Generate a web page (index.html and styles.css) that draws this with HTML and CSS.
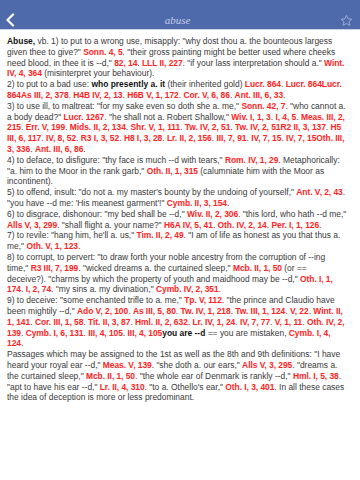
FILE: index.html
```html
<!DOCTYPE html>
<html>
<head>
<meta charset="utf-8">
<link rel="stylesheet" href="styles.css">
</head>
<body>
<header class="bar">
  <div class="nav">
    <svg class="back" width="10" height="14" viewBox="0 0 10 14"><path d="M8 1.5 L2.5 7 L8 12.5" fill="none" stroke="#ffffff" stroke-width="2.2" stroke-linecap="round" stroke-linejoin="round"/></svg>
    <span class="title">abuse</span>
    <svg class="star" width="13" height="13" viewBox="0 0 24 24"><path d="M12 2.5 L14.9 8.9 L21.8 9.6 L16.6 14.2 L18.1 21 L12 17.5 L5.9 21 L7.4 14.2 L2.2 9.6 L9.1 8.9 Z" fill="none" stroke="#a7b4dc" stroke-width="1.6" stroke-linejoin="round"/></svg>
  </div>
</header>
<main class="entry">
  <p><b class="hw">Abuse,</b> vb. 1) to put to a wrong use, misapply: "why dost thou a. the bounteous largess given thee to give?" <b class="r">Sonn. 4, 5</b>. "their gross painting might be better used where cheeks need blood, in thee it is --d," <b class="r">82, 14</b>. <b class="r">LLL II, 227</b>. "if your lass interpretation should a." <b class="r">Wint. IV, 4, 364</b> (misinterpret your behaviour).</p>
  <p>2) to put to a bad use: <b class="k">who presently a. it</b> (their inherited gold) <b class="r">Lucr. 864</b>. <b class="r">Lucr. 864Lucr. 864As III, 2, 378</b>. <b class="r">H4B IV, 2, 13</b>. <b class="r">H6B V, 1, 172</b>. <b class="r">Cor. V, 6, 86</b>. <b class="r">Ant. III, 6, 33</b>.</p>
  <p>3) to use ill, to maltreat: "for my sake even so doth she a. me," <b class="r">Sonn. 42, 7</b>. "who cannot a. a body dead?" <b class="r">Lucr. 1267</b>. "he shall not a. Robert Shallow," <b class="r">Wiv. I, 1, 3</b>. <b class="r">I, 4, 5</b>. <b class="r">Meas. III, 2, 215</b>. <b class="r">Err. V, 199</b>. <b class="r">Mids. II, 2, 134</b>. <b class="r">Shr. V, 1, 111</b>. <b class="r">Tw. IV, 2, 51</b>. <b class="r">Tw. IV, 2, 51R2 II, 3, 137</b>. <b class="r">H5 III, 6, 117</b>. <b class="r">IV, 8, 52</b>. <b class="r">R3 I, 3, 52</b>. <b class="r">H8 I, 3, 28</b>. <b class="r">Lr. II, 2, 156</b>. <b class="r">III, 7, 91</b>. <b class="r">IV, 7, 15</b>. <b class="r">IV, 7, 15Oth. III, 3, 336</b>. <b class="r">Ant. III, 6, 86</b>.</p>
  <p>4) to deface, to disfigure: "thy face is much --d with tears," <b class="r">Rom. IV, 1, 29</b>. Metaphorically: "a. him to the Moor in the rank garb," <b class="r">Oth. II, 1, 315</b> (calumniate him with the Moor as incontinent).</p>
  <p>5) to offend, insult: "do not a. my master's bounty by the undoing of yourself," <b class="r">Ant. V, 2, 43</b>. "you have --d me: 'His meanest garment'!" <b class="r">Cymb. II, 3, 154</b>.</p>
  <p>6) to disgrace, dishonour: "my bed shall be --d," <b class="r">Wiv. II, 2, 306</b>. "this lord, who hath --d me," <b class="r">Alls V, 3, 299</b>. "shall flight a. your name?" <b class="r">H6A IV, 5, 41</b>. <b class="r">Oth. IV, 2, 14</b>. <b class="r">Per. I, 1, 126</b>.</p>
  <p>7) to revile: "hang him, he'll a. us," <b class="r">Tim. II, 2, 49</b>. "I am of life as honest as you that thus a. me," <b class="r">Oth. V, 1, 123</b>.</p>
  <p>8) to corrupt, to pervert: "to draw forth your noble ancestry from the corruption of --ing time," <b class="r">R3 III, 7, 199</b>. "wicked dreams a. the curtained sleep," <b class="r">Mcb. II, 1, 50</b> (or == deceive?). "charms by which the property of youth and maidhood may be --d," <b class="r">Oth. I, 1, 174</b>. <b class="r">I, 2, 74</b>. "my sins a. my divination," <b class="r">Cymb. IV, 2, 351</b>.</p>
  <p>9) to deceive: "some enchanted trifle to a. me," <b class="r">Tp. V, 112</b>. "the prince and Claudio have been mightily --d," <b class="r">Ado V, 2, 100</b>. <b class="r">As III, 5, 80</b>. <b class="r">Tw. IV, 1, 218</b>. <b class="r">Tw. III, 1, 124</b>. <b class="r">V, 22</b>. <b class="r">Wint. II, 1, 141</b>. <b class="r">Cor. III, 1, 58</b>. <b class="r">Tit. II, 3, 87</b>. <b class="r">Hml. II, 2, 632</b>. <b class="r">Lr. IV, 1, 24</b>. <b class="r">IV, 7, 77</b>. <b class="r">V, 1, 11</b>. <b class="r">Oth. IV, 2, 139</b>. <b class="r">Cymb. I, 6, 131</b>. <b class="r">III, 4, 105</b>. <b class="r">III, 4, 105</b><b class="k">you are --d</b> == you are mistaken, <b class="r">Cymb. I, 4, 124</b>.</p>
  <p>Passages which may be assigned to the 1st as well as the 8th and 9th definitions: "I have heard your royal ear --d," <b class="r">Meas. V, 139</b>. "she doth a. our ears," <b class="r">Alls V, 3, 295</b>. "dreams a. the curtained sleep," <b class="r">Mcb. II, 1, 50</b>. "the whole ear of Denmark is rankly --d," <b class="r">Hml. I, 5, 38</b>. "apt to have his ear --d," <b class="r">Lr. II, 4, 310</b>. "to a. Othello's ear," <b class="r">Oth. I, 3, 401</b>. In all these cases the idea of deception is more or less predominant.</p>
</main>
</body>
</html>
```

FILE: styles.css
```css
html, body {
  margin: 0;
  padding: 0;
  background: #ffffff;
}

body {
  width: 360px;
  height: 480px;
  overflow: hidden;
  font-family: "Liberation Sans", Arial, sans-serif;
}

.bar {
  background: #4f6aab;
  height: 30px;
  padding-top: 10px;
  box-sizing: border-box;
  border-bottom: 1px solid #c9d0e4;
}

.nav {
  height: 20px;
  display: flex;
  align-items: center;
  justify-content: space-between;
  padding: 0 7px 0 5px;
}

.back {
  display: block;
}

.star {
  display: block;
}

.title {
  font-family: "Liberation Serif", "Times New Roman", serif;
  font-style: italic;
  font-size: 11px;
  color: #c3cbe6;
}

.entry {
  padding: 6px 13px 0 7px;
  font-size: 8.45px;
  line-height: 10.8px;
  color: #3a3a3a;
}

.entry p {
  margin: 0;
}

.hw, .k {
  color: #111111;
  font-weight: bold;
}

.r {
  color: #ff2424;
  font-weight: bold;
  letter-spacing: -0.05px;
}
```
